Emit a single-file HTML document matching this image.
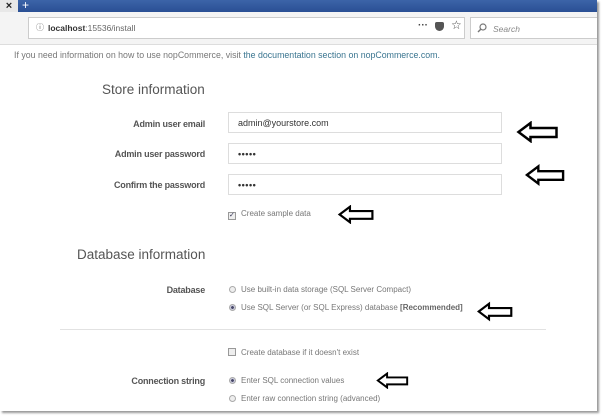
<!DOCTYPE html>
<html><head><style>
body{margin:0;width:605px;height:420px;background:#fff;position:relative;overflow:hidden;font-family:"Liberation Sans",sans-serif}
.frame{position:absolute;left:0;top:0;width:597px;height:411px;background:#fff;box-shadow:2px 2px 2px #999;overflow:hidden}
.a{position:absolute;white-space:nowrap}
.lbl{position:absolute;right:392px;font-size:9px;font-weight:bold;color:#555;text-align:right;letter-spacing:-0.2px}
.inp{position:absolute;left:228px;width:274px;height:21px;border:1px solid #ddd;background:#fff;font-size:9px;color:#333;line-height:20px;padding-left:9px;box-sizing:border-box}
.opt{position:absolute;left:229px;font-size:8px;color:#777;white-space:nowrap}
.rad{display:inline-block;width:7px;height:7px;border-radius:50%;border:1px solid #aaa;box-sizing:border-box;vertical-align:-1px;margin-right:5px;background:#eee}
.rad.on{background:radial-gradient(#446 35%,#ccd 45%)}
.cb{display:inline-block;width:8px;height:8px;border:1px solid #999;box-sizing:border-box;vertical-align:-1px;margin-right:5px;background:#eee;font-size:7px;line-height:6px;color:#335}
svg.ar{position:absolute}
</style></head><body>
<div class="frame">
<div class="a" style="left:0;top:0;width:18px;height:13px;background:#e8e8e8;font-size:11px;font-weight:bold;line-height:12px;text-align:center;color:#222">×</div>
<div class="a" style="left:18px;top:0;width:579px;height:12px;background:linear-gradient(#3c64a8,#2a4f94)"></div>
<div class="a" style="left:22px;top:-2px;color:#fff;font-size:12px">+</div>
<div class="a" style="left:0;top:12px;width:597px;height:32px;background:#f4f4f4;border-bottom:1px solid #ddd"></div>
<div class="a" style="left:28px;top:17px;width:437px;height:22px;background:#fff;border:1px solid #ccc;box-sizing:border-box"></div>
<div class="a" style="left:36px;top:22px;font-size:8px;color:#666">ⓘ</div>
<div class="a" style="left:48px;top:23px;font-size:8.5px;color:#666"><b style="color:#333">localhost</b>:15536/install</div>
<div class="a" style="left:418px;top:20px;font-size:10px;color:#444;font-weight:bold">···</div>
<div class="a" style="left:435px;top:22px;width:9px;height:9px;background:#555;border-radius:2px 2px 5px 5px"></div>
<div class="a" style="left:451px;top:18px;font-size:12px;color:#444">☆</div>
<div class="a" style="left:470px;top:17px;width:128px;height:22px;background:#fff;border:1px solid #ccc;box-sizing:border-box"></div>
<svg class="ar" style="left:477px;top:23px" width="10" height="10" viewBox="0 0 10 10"><circle cx="6" cy="4" r="3" fill="none" stroke="#777" stroke-width="1.2"/><line x1="4" y1="6" x2="1" y2="9" stroke="#777" stroke-width="1.4"/></svg>
<div class="a" style="left:493px;top:24px;font-size:8.5px;color:#888;font-style:italic">Search</div>
<div class="a" style="left:14px;top:50px;font-size:8.8px;color:#777">If you need information on how to use nopCommerce, visit <span style="color:#3a7590">the documentation section on nopCommerce.com.</span></div>
<div class="a" style="left:102px;top:82px;font-size:13.5px;color:#555">Store information</div>
<div class="lbl" style="top:119px">Admin user email</div>
<div class="inp" style="top:112px">admin@yourstore.com</div>
<div class="lbl" style="top:149px">Admin user password</div>
<div class="inp" style="top:143px;font-weight:bold;letter-spacing:0.5px">•••••</div>
<div class="lbl" style="top:180px">Confirm the password</div>
<div class="inp" style="top:174px;font-weight:bold;letter-spacing:0.5px">•••••</div>
<div class="opt" style="top:209px;left:228px"><span class="cb">✓</span>Create sample data</div>
<div class="a" style="left:77px;top:247px;font-size:13.5px;color:#555">Database information</div>
<div class="lbl" style="top:285px">Database</div>
<div class="opt" style="top:285px"><span class="rad"></span>Use built-in data storage (SQL Server Compact)</div>
<div class="opt" style="top:303px"><span class="rad on"></span>Use SQL Server (or SQL Express) database <b style="color:#666">[Recommended]</b></div>
<div class="a" style="left:60px;top:329px;width:486px;height:1px;background:#e2e2e2"></div>
<div class="opt" style="top:348px;left:228px"><span class="cb"></span>Create database if it doesn't exist</div>
<div class="lbl" style="top:376px">Connection string</div>
<div class="opt" style="top:376px"><span class="rad on"></span>Enter SQL connection values</div>
<div class="opt" style="top:394px"><span class="rad"></span>Enter raw connection string (advanced)</div>
<svg class="ar" style="left:516px;top:121px" width="43" height="22" viewBox="0 0 42 22"><polygon points="2,11 14,2 14,7 40,7 40,16 14,16 14,20" fill="#fff" stroke="#000" stroke-width="2.5"/></svg>
<svg class="ar" style="left:525px;top:164px" width="40" height="22" viewBox="0 0 42 22"><polygon points="2,11 14,2 14,7 40,7 40,16 14,16 14,20" fill="#fff" stroke="#000" stroke-width="2.5"/></svg>
<svg class="ar" style="left:333px;top:205px" width="46" height="19" viewBox="0 0 42 22"><polygon points="2,11 14,2 14,7 40,7 40,16 14,16 14,20" fill="#fff" stroke="#000" stroke-width="2.5"/></svg>
<svg class="ar" style="left:477px;top:301px" width="36" height="21" viewBox="0 0 42 22"><polygon points="2,11 14,2 14,7 40,7 40,16 14,16 14,20" fill="#fff" stroke="#000" stroke-width="2.5"/></svg>
<svg class="ar" style="left:372px;top:372px" width="41" height="17" viewBox="0 0 42 22"><polygon points="2,11 14,2 14,7 40,7 40,16 14,16 14,20" fill="#fff" stroke="#000" stroke-width="2.5"/></svg>
</div>
</body></html>
